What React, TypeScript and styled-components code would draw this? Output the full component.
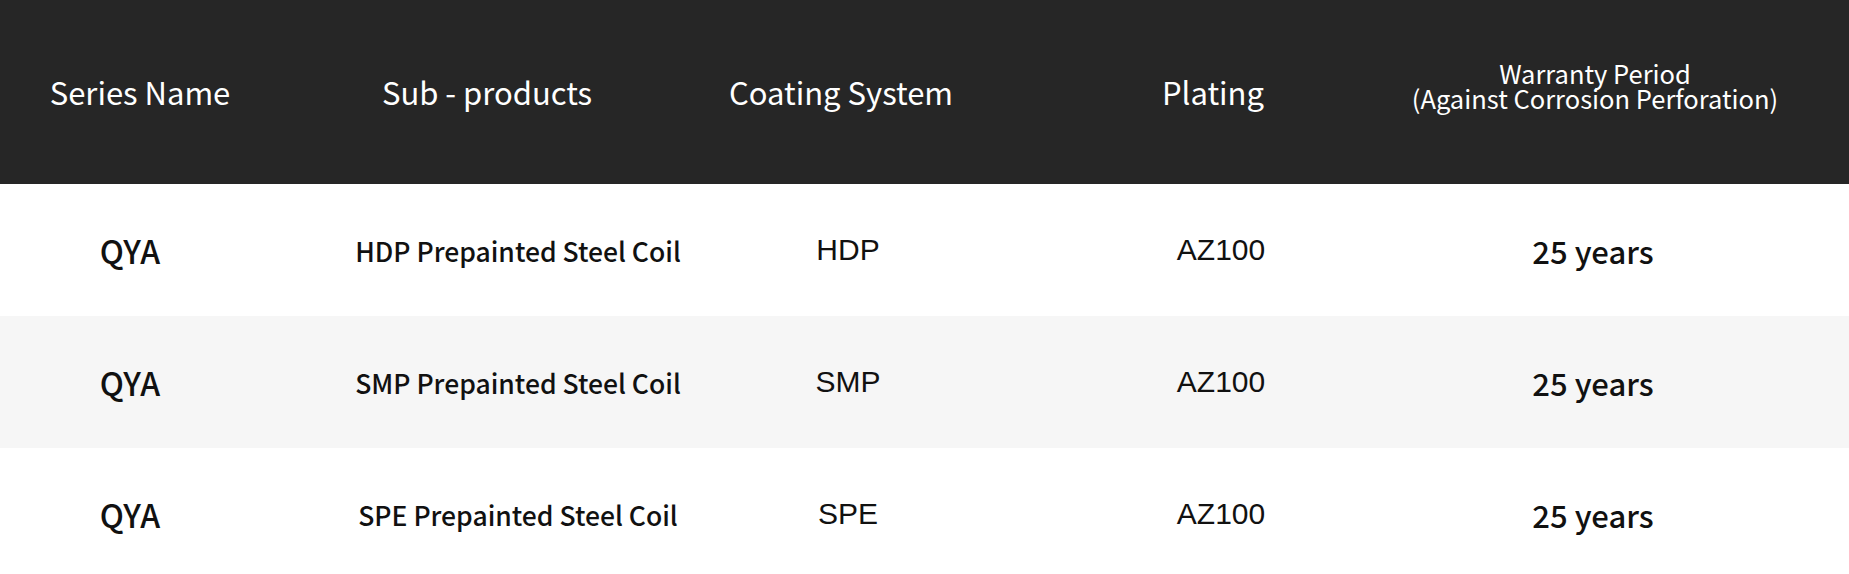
import React from "react";
import styled, { createGlobalStyle } from "styled-components";

const Global = createGlobalStyle`
  html, body { margin: 0; padding: 0; background: #ffffff; }
  body { width: 1849px; height: 574px; overflow: hidden; }
`;

const Table = styled.div`
  width: 1849px;
  display: flex;
  flex-direction: column;
  font-family: "Noto Sans CJK SC", "Noto Sans", sans-serif;
`;

const HeaderRow = styled.div`
  height: 184px;
  background: #262626;
  display: grid;
  grid-template-columns: 280px 414px 294px 450px 314px;
  align-items: center;
  color: #ffffff;
`;

const HeadCell = styled.div<{ $small?: boolean }>`
  display: flex;
  justify-content: center;
  text-align: center;
  font-size: ${(p) => (p.$small ? "25.5px" : "31px")};
  line-height: ${(p) => (p.$small ? "25px" : "34px")};
  padding-bottom: ${(p) => (p.$small ? "14px" : "0")};
  font-weight: 400;
  white-space: nowrap;
`;

const BodyRow = styled.div<{ $alt?: boolean }>`
  height: 132px;
  background: ${(p) => (p.$alt ? "#f6f6f6" : "#ffffff")};
  display: grid;
  grid-template-columns: 260px 516px 144px 602px 142px;
  align-items: center;
  color: #111111;
`;

type Kind = "name" | "product" | "mono" | "years";

const sizes: Record<Kind, string> = {
  name: "32px",
  product: "26.5px",
  mono: "30px",
  years: "31px",
};

const Cell = styled.div<{ $kind: Kind }>`
  display: flex;
  justify-content: center;
  white-space: nowrap;
  font-family: ${(p) =>
    p.$kind === "mono"
      ? '"Liberation Sans", Arial, sans-serif'
      : '"Noto Sans CJK SC", "Noto Sans", sans-serif'};
  font-size: ${(p) => sizes[p.$kind]};
  font-weight: ${(p) => (p.$kind === "mono" ? 400 : 500)};
`;

const rows = [
  { product: "HDP Prepainted Steel Coil", coat: "HDP" },
  { product: "SMP Prepainted Steel Coil", coat: "SMP" },
  { product: "SPE Prepainted Steel Coil", coat: "SPE" },
];

export default function App() {
  return (
    <>
      <Global />
      <Table>
        <HeaderRow>
          <HeadCell>Series Name</HeadCell>
          <HeadCell>Sub - products</HeadCell>
          <HeadCell>Coating System</HeadCell>
          <HeadCell>Plating</HeadCell>
          <HeadCell $small>
            <span>
              Warranty Period
              <br />
              (Against Corrosion Perforation)
            </span>
          </HeadCell>
        </HeaderRow>
        {rows.map((r, i) => (
          <BodyRow key={r.coat} $alt={i === 1}>
            <Cell $kind="name">QYA</Cell>
            <Cell $kind="product">{r.product}</Cell>
            <Cell $kind="mono">{r.coat}</Cell>
            <Cell $kind="mono">AZ100</Cell>
            <Cell $kind="years">25 years</Cell>
          </BodyRow>
        ))}
      </Table>
    </>
  );
}
